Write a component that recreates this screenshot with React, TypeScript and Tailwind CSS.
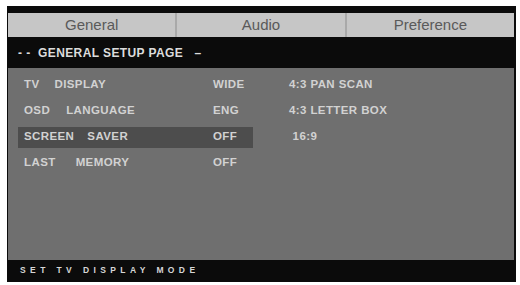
const tabs = ['General', 'Audio', 'Preference']

const rows = [
  { a: 'TV', b: 'DISPLAY', gap: 'ml-[15px]', value: 'WIDE', option: '4:3 PAN SCAN' },
  { a: 'OSD', b: 'LANGUAGE', gap: 'ml-[16px]', value: 'ENG', option: '4:3 LETTER BOX' },
  { a: 'SCREEN', b: 'SAVER', gap: 'ml-[13px]', value: 'OFF', option: ' 16:9', active: true },
  { a: 'LAST', b: 'MEMORY', gap: 'ml-[20px]', value: 'OFF', option: '' },
]

export default function App() {
  return (
    <div className="w-[520px] h-[285px] bg-white pt-[6px] pl-[7px] font-['Liberation_Sans',Arial,sans-serif]">
      <div className="w-[509px] h-[276px] bg-[#0b0b0b] flex flex-col pt-[7px] pb-[1px] pl-[1px] pr-[2px]">
        {/* tab bar */}
        <div className="flex h-[24px] bg-[#c6c6c6]">
          {tabs.map((t, i) => (
            <div
              key={t}
              className={`flex-1 flex items-center justify-center text-[15px] text-[#5a5a5a] ${i > 0 ? 'border-l-2 border-[#a9a9a9]' : ''}`}
            >
              {t}
            </div>
          ))}
        </div>

        {/* page header */}
        <div className="h-[31px] flex items-center pl-[10px] text-[12px] font-bold text-[#dcdcdc] whitespace-pre tracking-[0.4px]">
          {'- -  GENERAL SETUP PAGE   –'}
        </div>

        {/* settings */}
        <div className="flex-1 bg-[#6f6f6f] pt-[4px] pl-[10px] text-[11.5px] font-bold tracking-[0.4px] text-[#d2d2d2]">
          {rows.map(r => (
            <div key={r.a} className="flex items-center h-[26px]">
              <div
                className={`flex items-center h-[21px] w-[235px] pl-[6px] ${r.active ? 'bg-[#4d4d4d]' : ''}`}
              >
                <span className="w-[189px] whitespace-pre">
                  {r.a}
                  <span className={r.gap}>{r.b}</span>
                </span>
                <span>{r.value}</span>
              </div>
              <span className="ml-[36px] whitespace-pre">{r.option}</span>
            </div>
          ))}
        </div>

        {/* status bar */}
        <div className="h-[21px] flex items-center pl-[12px] text-[8.5px] font-bold text-[#d6d6d6] tracking-[4.4px]">
          SET TV DISPLAY MODE
        </div>
      </div>
    </div>
  )
}
